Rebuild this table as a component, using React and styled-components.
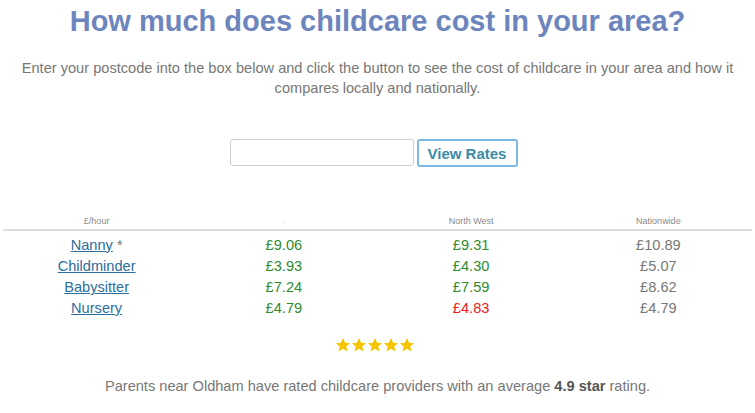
import React from "react";
import styled, { createGlobalStyle } from "styled-components";

const GlobalStyle = createGlobalStyle`
  body {
    margin: 0;
    background: #ffffff;
    font-family: "Liberation Sans", Arial, sans-serif;
  }
`;

const Page = styled.div`
  padding: 5px 3px 0;
  text-align: center;
`;

const Title = styled.h1`
  margin: 0;
  font-size: 29px;
  line-height: 33px;
  font-weight: 700;
  color: #6d85bd;
`;

const Intro = styled.p`
  margin: 20px 8px 0;
  font-size: 14.6px;
  line-height: 20px;
  color: #777777;
`;

const Form = styled.div`
  display: flex;
  justify-content: center;
  gap: 3px;
  margin: 41px 8px 0 0;
`;

const PostcodeInput = styled.input`
  box-sizing: border-box;
  width: 184px;
  height: 27px;
  border: 1px solid #cfcfcf;
  border-radius: 3px;
  background: #fff;
  padding: 0 8px;
  font-family: inherit;
  font-size: 14px;
`;

const Button = styled.button`
  box-sizing: border-box;
  width: 101px;
  height: 28px;
  border: 2px solid #7db9e2;
  border-radius: 3px;
  background: #fff;
  color: #3b8ba7;
  font-family: inherit;
  font-weight: 700;
  font-size: 15px;
  padding: 0;
  cursor: pointer;
`;

const Table = styled.div`
  margin-top: 49px;
`;

const HeadRow = styled.div`
  display: grid;
  grid-template-columns: repeat(4, 1fr);
  border-bottom: 2px solid #dddddd;
  padding-bottom: 2px;
`;

const HeadCell = styled.div`
  font-size: 9px;
  line-height: 11px;
  color: ${(p) => (p.$faint ? "#dddddd" : "#8a8a8a")};
`;

const Body = styled.div`
  padding-top: 4px;
`;

const Row = styled.div`
  display: grid;
  grid-template-columns: repeat(4, 1fr);
  height: 21px;
  align-items: center;
  font-size: 14.6px;
  line-height: 21px;
`;

const Link = styled.a`
  color: #2c6e9e;
  text-decoration: underline;
`;

const Note = styled.span`
  color: #777777;
`;

const Price = styled.div`
  color: ${(p) => p.$tone};
`;

const Stars = styled.div`
  display: flex;
  justify-content: center;
  margin: 18px 6px 0 0;
  height: 16px;
`;

const Rating = styled.p`
  margin: 23px 0 0;
  font-size: 14.6px;
  line-height: 20px;
  color: #777777;

  b {
    color: #555555;
  }
`;

const GREEN = "#2e8b2e";
const RED = "#f02020";
const GREY = "#777777";

const rows = [
  { name: "Nanny", note: true, local: "£9.06", region: "£9.31", regionTone: GREEN, national: "£10.89" },
  { name: "Childminder", local: "£3.93", region: "£4.30", regionTone: GREEN, national: "£5.07" },
  { name: "Babysitter", local: "£7.24", region: "£7.59", regionTone: GREEN, national: "£8.62" },
  { name: "Nursery", local: "£4.79", region: "£4.83", regionTone: RED, national: "£4.79" },
];

const Star = () => (
  <svg width="16" height="16" viewBox="0 0 24 24">
    <path
      d="M12 1.5l3.1 7.1 7.6.6-5.8 5 1.8 7.5L12 17.7l-6.7 4 1.8-7.5-5.8-5 7.6-.6z"
      fill="#f6c400"
    />
  </svg>
);

export default function App() {
  return (
    <>
      <GlobalStyle />
      <Page>
        <Title>How much does childcare cost in your area?</Title>
        <Intro>
          Enter your postcode into the box below and click the button to see the cost of
          childcare in your area and how it compares locally and nationally.
        </Intro>
        <Form>
          <PostcodeInput type="text" />
          <Button>View Rates</Button>
        </Form>
        <Table>
          <HeadRow>
            <HeadCell>£/hour</HeadCell>
            <HeadCell $faint>.</HeadCell>
            <HeadCell>North West</HeadCell>
            <HeadCell>Nationwide</HeadCell>
          </HeadRow>
          <Body>
            {rows.map((r) => (
              <Row key={r.name}>
                <div>
                  <Link href="#">{r.name}</Link>
                  {r.note && <Note> *</Note>}
                </div>
                <Price $tone={GREEN}>{r.local}</Price>
                <Price $tone={r.regionTone}>{r.region}</Price>
                <Price $tone={GREY}>{r.national}</Price>
              </Row>
            ))}
          </Body>
        </Table>
        <Stars>
          {[0, 1, 2, 3, 4].map((i) => (
            <Star key={i} />
          ))}
        </Stars>
        <Rating>
          Parents near Oldham have rated childcare providers with an average <b>4.9 star</b> rating.
        </Rating>
      </Page>
    </>
  );
}
